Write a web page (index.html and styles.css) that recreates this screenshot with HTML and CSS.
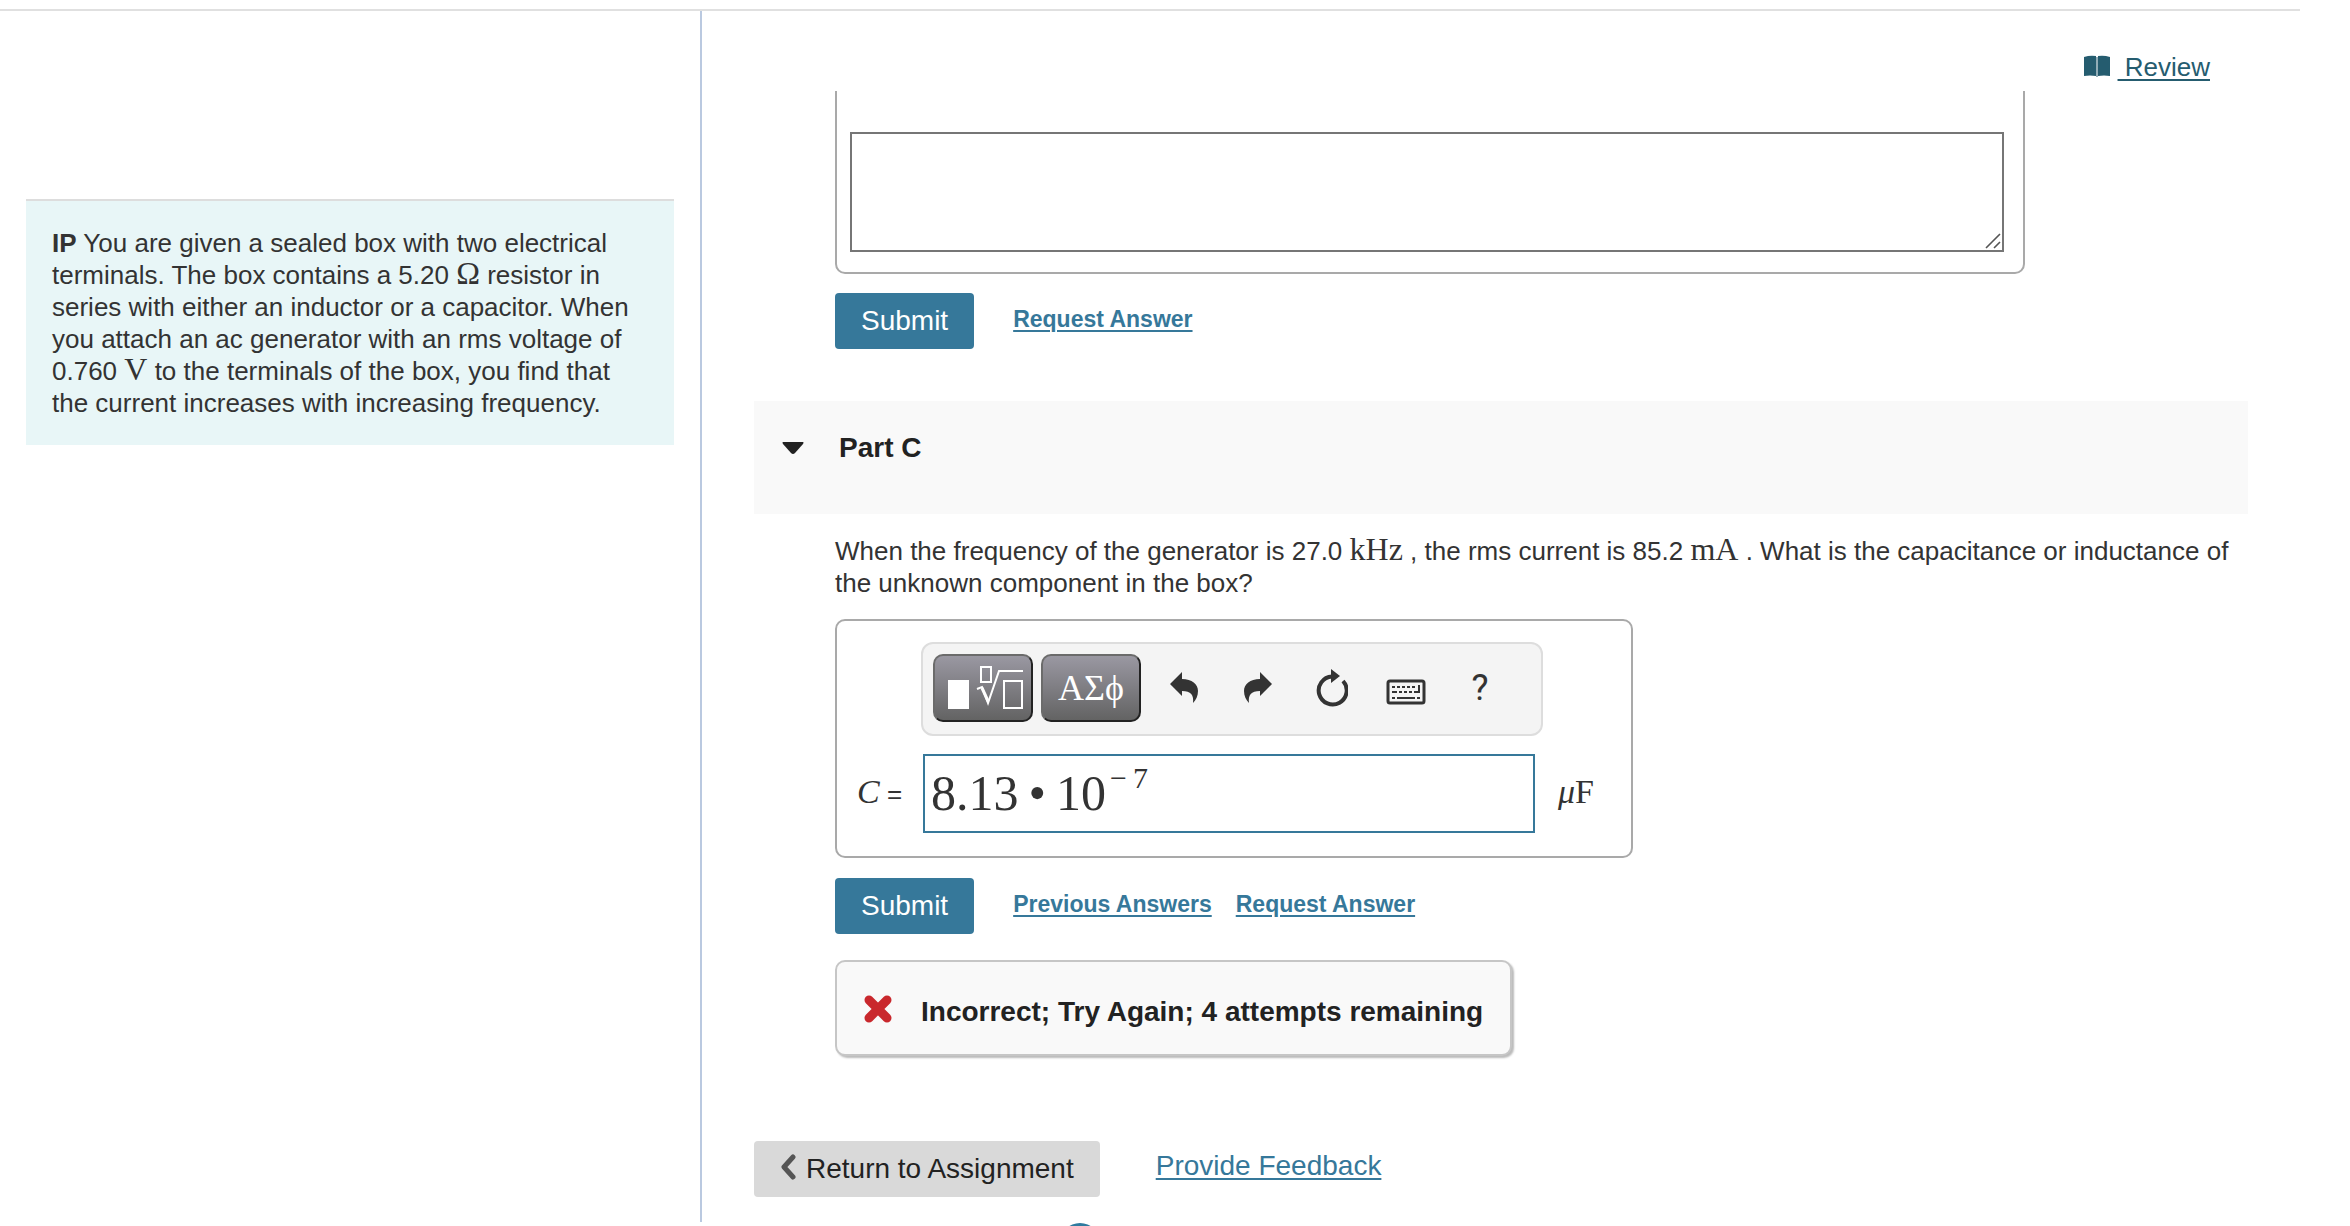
FILE: index.html
```html
<!DOCTYPE html>
<html lang="en">
<head>
  <meta charset="UTF-8">
  <meta name="viewport" content="width=device-width, initial-scale=1.0">
  <title>Part C</title>
  <link rel="stylesheet" href="styles.css">
</head>
<body>
  <hr class="top-line">
  <div class="layout">
    <aside class="sidebar">
      <div class="problem">
        <b>IP</b> You are given a sealed box with two electrical terminals. The box contains a 5.20 <span class="unit">Ω</span> resistor in series with either an inductor or a capacitor. When you attach an ac generator with an rms voltage of 0.760 <span class="unit">V</span> to the terminals of the box, you find that the current increases with increasing frequency.
      </div>
    </aside>

    <main class="content">
      <div class="review">
        <svg width="26" height="22" viewBox="0 0 26 22" aria-hidden="true">
          <path d="M0 2Q6 0 12 1V21Q6 20 0 21ZM14 1Q20 0 26 2V21Q20 20 14 21Z" fill="#255c6f"/>
          <path d="M12 2h2v20h-2z" fill="#92adb7"/>
        </svg>
        <a href="#">&nbsp;Review</a>
      </div>

      <div class="scroll">
        <div class="part">
          <div class="essay">
            <label class="counter" for="essay">character(s) remaining</label>
            <div class="essay-field">
              <textarea id="essay"></textarea>
              <svg class="grip" width="16" height="16" viewBox="0 0 16 16" aria-hidden="true">
                <path d="M1 15L15 1M9 15l6-6" stroke="#555" stroke-width="1.6"/>
              </svg>
            </div>
          </div>
          <div class="actions">
            <button class="submit">Submit</button>
            <a href="#">Request Answer</a>
          </div>
        </div>

        <div class="part-header">
          <svg width="22" height="12" viewBox="0 0 22 12" aria-hidden="true">
            <path d="M1 0h20q1 0 0 2l-8 9q-2 2-4 0L1 2q-1-2 0-2z" fill="#222"/>
          </svg>
          <h2>Part C</h2>
        </div>

        <div class="part">
          <p class="question">When the frequency of the generator is 27.0 <span class="unit">kHz</span> , the rms current is 85.2 <span class="unit">mA</span> . What is the capacitance or inductance of the unknown component in the box?</p>

          <div class="answer">
            <div class="toolbar">
              <button class="math-button" aria-label="Templates">
                <svg width="80" height="44" viewBox="0 0 80 44" aria-hidden="true">
                  <path d="M5 14h21v29H5z" fill="#fff"/>
                  <path d="M38 1h10v15H38zM61 15h18v27H61z" fill="none" stroke="#fff" stroke-width="2"/>
                  <path d="M34 23l5-2 6 16L56 5h24" fill="none" stroke="#fff" stroke-width="2"/>
                  <path d="M39 22l6 13" stroke="#fff" stroke-width="3"/>
                </svg>
              </button>
              <button class="math-button">ΑΣϕ</button>
              <div class="tools">
                <button class="tool" aria-label="Undo">
                  <svg width="28" height="32" viewBox="0 0 28 32">
                    <path d="M0 12L12 0v7c10 0 16 5 16 12 0 5-2 9-5 12 1-8-2-12-11-12v5z" fill="#333"/>
                  </svg>
                </button>
                <button class="tool" aria-label="Redo">
                  <svg width="28" height="32" viewBox="0 0 28 32">
                    <path d="M28 12L16 0v7C6 7 0 12 0 19c0 5 2 9 5 12-1-8 2-12 11-12v5z" fill="#333"/>
                  </svg>
                </button>
                <button class="tool" aria-label="Reset">
                  <svg width="32" height="38" viewBox="0 0 32 38">
                    <path d="M16 7.500A14 14 0 1 0 27 12" fill="none" stroke="#333" stroke-width="4"/>
                    <path d="M15 0l9 7-9 7z" fill="#333"/>
                  </svg>
                </button>
                <button class="tool tool-keyboard" aria-label="Keyboard">
                  <svg width="40" height="26" viewBox="0 0 40 26">
                    <rect x="2" y="2" width="36" height="22" rx="2" fill="none" stroke="#333" stroke-width="3"/>
                    <path d="M6 8h3M11 8h3M16 8h3M21 8h3M26 8h3M6 13h5M13 13h3M18 13h3M23 13h3M28 13h5V6M6 19h3M11 19h18M31 19h3" fill="none" stroke="#333" stroke-width="2"/>
                  </svg>
                </button>
                <button class="tool" aria-label="Help">?</button>
              </div>
            </div>
            <div class="entry">
              <span class="label" id="entry-label"><i>C</i> =</span>
              <div class="math-input" role="textbox" contenteditable="true" aria-labelledby="entry-label">8.13<span class="dot">•</span>10<sup>−<span class="digit">7</span></sup></div>
              <span class="suffix"><i>μ</i>F</span>
            </div>
          </div>

          <div class="actions">
            <button class="submit">Submit</button>
            <a href="#">Previous Answers</a>
            <a href="#">Request Answer</a>
          </div>

          <div class="feedback">
            <svg width="28" height="28" viewBox="0 0 28 28" aria-hidden="true">
              <path d="M5 5l18 18M23 5L5 23" stroke="#c9282d" stroke-width="9" stroke-linecap="round"/>
            </svg>
            <span>Incorrect; Try Again; 4 attempts remaining</span>
          </div>
        </div>

        <div class="bottom">
          <button class="return">
            <svg width="16" height="26" viewBox="0 0 16 26" aria-hidden="true">
              <path d="M13 3L4 13l9 10" fill="none" stroke="#555" stroke-width="5" stroke-linecap="round" stroke-linejoin="round"/>
            </svg>
            Return to Assignment
          </button>
          <a href="#">Provide Feedback</a>
        </div>
      </div>
    </main>
  </div>
  <footer class="footer">
    <div class="logo"></div>
  </footer>
</body>
</html>
```

FILE: styles.css
```css
* {
  box-sizing: border-box;
}

body {
  font-family: "Liberation Sans", Arial, sans-serif;
  font-size: 26px;
  line-height: 32px;
  color: #333;
  background-color: #fff;
  margin: 0;
  height: 100vh;
  overflow: hidden;
}

svg {
  display: block;
}

button {
  font-family: inherit;
  cursor: pointer;
}

a {
  color: #36789a;
  text-decoration-thickness: 2px;
  text-underline-offset: 3px;
}

.top-line {
  border: none;
  height: 2px;
  background-color: #e0e0e0;
  margin: 9px 50px 0 0;
}

.layout {
  display: flex;
  height: calc(100vh - 15px);
}

.sidebar {
  flex: 0 0 702px;
  padding: 188px 26px 0;
  border-right: 2px solid #bac9e0;
}

.problem {
  background-color: #e8f6f7;
  border-top: 2px solid #ddd;
  padding: 26px;
}

.unit {
  font-family: "Liberation Serif", "Times New Roman", serif;
  font-size: 32px;
  line-height: 28px;
}

.content {
  flex: 1;
  padding: 0 102px 0 52px;
}

.review {
  display: flex;
  justify-content: flex-end;
  align-items: center;
  gap: 8px;
  height: 80px;
  padding: 32px 38px 0 0;
}

.review svg {
  margin-bottom: 2px;
}

.review a {
  color: #255c6f;
}

.scroll {
  overflow: hidden;
}

.part {
  padding-left: 81px;
}

/* scrolled part way out of view */
.essay {
  max-width: 1190px;
  margin-top: -50px;
  padding: 18px 19px 20px 13px;
  border: 2px solid #a9a9a9;
  border-radius: 10px;
}

.counter {
  display: block;
  text-align: right;
  padding-right: 5px;
  margin-bottom: 39px;
}

.essay-field {
  position: relative;
}

.essay-field textarea {
  display: block;
  width: 100%;
  height: 120px;
  border: 2px solid #767676;
  resize: none;
}

.grip {
  position: absolute;
  right: 3px;
  bottom: 3px;
}

.actions {
  display: flex;
  align-items: center;
  gap: 24px;
  margin-top: 19px;
  font-size: 23px;
  font-weight: bold;
}

.actions a {
  padding-bottom: 4px;
}

.submit {
  background-color: #36789a;
  color: #fff;
  border: none;
  border-radius: 4px;
  height: 56px;
  padding: 0 26px;
  margin-right: 15px;
  font-size: 28px;
}

.part-header {
  display: flex;
  align-items: center;
  gap: 35px;
  height: 113px;
  margin: 52px 0 21px;
  padding: 0 28px 20px;
  background-color: #f9f9f9;
}

.part-header h2 {
  margin: 0;
  font-size: 28px;
  color: #222;
}

.question {
  margin: 0 0 20px;
}

.answer {
  max-width: 798px;
  margin-bottom: 20px;
  padding: 21px 34px 23px 20px;
  border: 2px solid #a9a9a9;
  border-radius: 10px;
}

.toolbar {
  display: flex;
  align-items: center;
  gap: 8px;
  width: 622px;
  height: 94px;
  margin: 0 0 18px 64px;
  padding: 0 10px 2px;
  background-color: #f4f4f4;
  border: 2px solid #ddd;
  border-radius: 12px;
}

.math-button {
  display: flex;
  justify-content: center;
  align-items: center;
  width: 100px;
  height: 68px;
  padding: 0;
  color: #fff;
  background-image: linear-gradient(#9a98a2, #636363);
  border: 2px solid #222;
  border-top-color: #6b6b6b;
  border-left-color: #6b6b6b;
  border-radius: 10px;
  font-family: "Liberation Serif", "Times New Roman", serif;
  font-size: 36px;
}

.tools {
  display: flex;
  margin-left: -2px;
}

.tool {
  display: flex;
  justify-content: center;
  align-items: center;
  width: 74px;
  height: 60px;
  padding: 0;
  color: #333;
  background: none;
  border: none;
  font-family: Roboto, sans-serif;
  font-size: 36px;
}

.tool-keyboard {
  padding-top: 8px;
}

.entry {
  display: flex;
  align-items: center;
}

.label {
  width: 66px;
  padding-bottom: 2px;
}

.label i,
.suffix {
  font-family: "Liberation Serif", "Times New Roman", serif;
  font-size: 34px;
}

.math-input {
  width: 612px;
  height: 79px;
  padding-left: 6px;
  border: 2px solid #36789a;
  font-family: "Liberation Serif", "Times New Roman", serif;
  font-size: 50px;
  line-height: 75px;
}

.math-input .dot {
  margin: 0 10px;
}

.math-input sup {
  font-size: 30px;
  line-height: 30px;
  vertical-align: 22px;
  margin-left: 4px;
}

.math-input .digit {
  margin-left: 6px;
}

.suffix {
  margin-left: 23px;
  padding-bottom: 4px;
}

.feedback {
  display: flex;
  align-items: center;
  gap: 29px;
  width: fit-content;
  height: 96px;
  margin-top: 26px;
  padding: 4px 27px 0;
  background-color: #f9f9f9;
  border: 2px solid #c6c6c6;
  border-radius: 10px;
  box-shadow: 2px 2px 2px #bbb;
  color: #222;
  font-size: 28px;
  font-weight: bold;
}

.feedback svg {
  margin-bottom: 2px;
}

.feedback span {
  padding-top: 3px;
}

.bottom {
  display: flex;
  align-items: center;
  gap: 56px;
  margin-top: 85px;
  font-size: 28px;
}

.bottom a {
  padding-bottom: 6px;
}

.return {
  display: flex;
  align-items: center;
  gap: 10px;
  height: 56px;
  padding: 0 26px;
  background-color: #d9d9d9;
  color: #222;
  border: none;
  border-radius: 4px;
  font-size: 28px;
}

.return svg {
  margin-bottom: 4px;
}

.footer {
  padding: 1px 0 0 1060px;
}

.logo {
  width: 40px;
  height: 40px;
  border-radius: 50%;
  background-color: #2f7b9f;
}
```
